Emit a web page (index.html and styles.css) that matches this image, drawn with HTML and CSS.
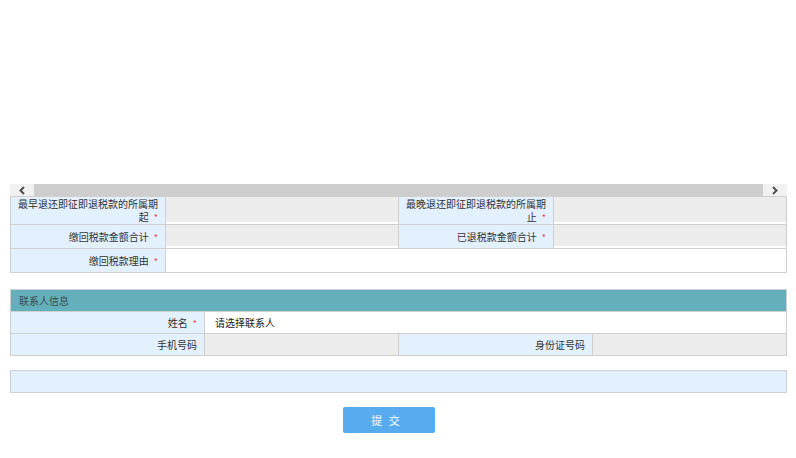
FILE: index.html
```html
<!DOCTYPE html>
<html lang="zh-CN">
<head>
    <meta charset="UTF-8">
    <title>退税申请</title>
    <link rel="stylesheet" href="styles.css">
</head>
<body>
    <div class="page">
        <div class="scrollbar">
            <span class="arrow"><svg width="8" height="9" viewBox="0 0 8 9"><path d="M6 1 L2.5 4.5 L6 8" fill="none" stroke="#505050" stroke-width="2"/></svg></span>
            <span class="track"></span>
            <span class="arrow"><svg width="8" height="9" viewBox="0 0 8 9"><path d="M2 1 L5.5 4.5 L2 8" fill="none" stroke="#505050" stroke-width="2"/></svg></span>
        </div>
        <table class="grid">
            <colgroup>
                <col class="c-label"><col class="c-value"><col class="c-label"><col class="c-value">
            </colgroup>
            <tr class="tall">
                <td class="label">最早退还即征即退税款的所属期起<i>*</i></td>
                <td class="value readonly"><div class="box"></div></td>
                <td class="label">最晚退还即征即退税款的所属期止<i>*</i></td>
                <td class="value readonly"><div class="box"></div></td>
            </tr>
            <tr>
                <td class="label">缴回税款金额合计<i>*</i></td>
                <td class="value readonly"><div class="box"></div></td>
                <td class="label">已退税款金额合计<i>*</i></td>
                <td class="value readonly"><div class="box"></div></td>
            </tr>
            <tr>
                <td class="label">缴回税款理由<i>*</i></td>
                <td class="value" colspan="3"></td>
            </tr>
        </table>

        <table class="grid contact">
            <colgroup>
                <col class="c-label2"><col class="c-value2"><col class="c-label2"><col class="c-value2">
            </colgroup>
            <tr>
                <td class="section" colspan="4">联系人信息</td>
            </tr>
            <tr>
                <td class="label">姓名<i>*</i></td>
                <td class="value text" colspan="3">请选择联系人</td>
            </tr>
            <tr>
                <td class="label">手机号码</td>
                <td class="value readonly"></td>
                <td class="label">身份证号码</td>
                <td class="value readonly"></td>
            </tr>
        </table>

        <div class="blank"></div>

        <div class="actions">
            <button type="button">提 交</button>
        </div>
    </div>
</body>
</html>
```

FILE: styles.css
```css
body {
    margin: 0;
    font-family: "Noto Sans CJK SC", "Microsoft YaHei", sans-serif;
    font-size: 10px;
    color: #333;
    background-color: #fff;
}
.page {
    padding: 184px 9px 0 10px;
}
.scrollbar {
    display: flex;
    height: 12px;
    background-color: #cdcdcd;
}
.arrow {
    width: 24px;
    background-color: #f1f1f1;
    display: flex;
    align-items: center;
    justify-content: center;
}
.track {
    flex: 1;
}
.grid {
    width: 100%;
    border-collapse: collapse;
    table-layout: fixed;
}
.grid td {
    border: 1px solid #cfcfcf;
    height: 23px;
    padding: 0;
}
.c-label { width: 155px; }
.c-value { width: 233px; }
.c-label2 { width: 194px; }
.c-value2 { width: 194px; }
.grid .tall td {
    height: 26px;
}
.label {
    background-color: #e3f0fd;
    text-align: right;
    padding: 0 7px 0 2px !important;
    line-height: 13px;
}
.label i {
    font-style: normal;
    color: #f03c3c;
    font-size: 9px;
    margin-left: 5px;
}
.value {
    background-color: #fff;
}
.readonly {
    background-color: #ececec;
}
.box {
    height: 100%;
    border-bottom: 2px solid #fff;
    box-sizing: border-box;
}
.text {
    padding-left: 10px !important;
    color: #222;
}
.contact {
    margin-top: 16px;
}
.contact td {
    height: 21px;
}
.section {
    background-color: #63b0bb;
    padding-left: 8px !important;
    color: #3c4a4d;
}
.blank {
    margin-top: 14px;
    height: 21px;
    background-color: #e3f0fd;
    border: 1px solid #cfcfcf;
}
.actions {
    text-align: center;
    margin-top: 14px;
    padding-right: 20px;
}
button {
    width: 92px;
    height: 26px;
    background-color: #57abee;
    color: #fff;
    border: none;
    border-radius: 2px;
    font-family: inherit;
    font-size: 11px;
    letter-spacing: 2px;
    padding-left: 2px;
    cursor: pointer;
}
```
